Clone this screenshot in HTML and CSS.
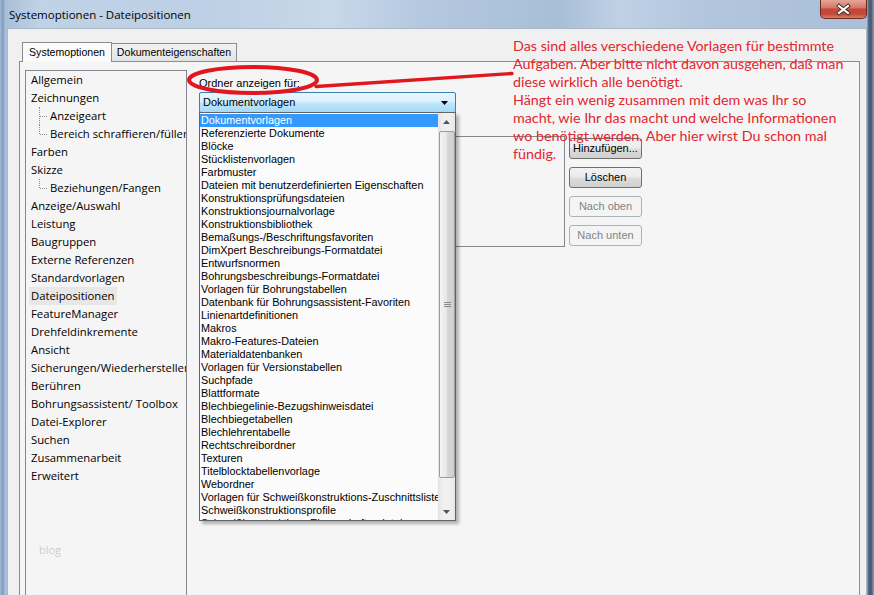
FILE: index.html
```html
<!DOCTYPE html>
<html lang="de">
<head>
<meta charset="utf-8">
<title>Systemoptionen - Dateipositionen</title>
<link rel="stylesheet" href="styles.css">
</head>
<body>
<div class="window">
  <div class="titlebar">
    <span class="title">Systemoptionen - Dateipositionen</span>
    <div class="close">
      <svg width="45" height="18" viewBox="0 0 45 18">
        <path d="M18 6 L27 13 M27 6 L18 13" stroke="#3a2a2a" stroke-width="4" stroke-linecap="square" fill="none"/>
        <path d="M18 6 L27 13 M27 6 L18 13" stroke="#ffffff" stroke-width="2.2" stroke-linecap="square" fill="none"/>
      </svg>
    </div>
  </div>
  <div class="client">
    <div class="tabs">
      <div class="tab active">Systemoptionen</div>
      <div class="tab">Dokumenteigenschaften</div>
    </div>
    <div class="panel">
      <ul class="tree">
        <li>Allgemein</li>
        <li>Zeichnungen</li>
        <li class="child">Anzeigeart</li>
        <li class="child last">Bereich schraffieren/füllen</li>
        <li>Farben</li>
        <li>Skizze</li>
        <li class="child last">Beziehungen/Fangen</li>
        <li>Anzeige/Auswahl</li>
        <li>Leistung</li>
        <li>Baugruppen</li>
        <li>Externe Referenzen</li>
        <li>Standardvorlagen</li>
        <li class="sel"><span>Dateipositionen</span></li>
        <li>FeatureManager</li>
        <li>Drehfeldinkremente</li>
        <li>Ansicht</li>
        <li>Sicherungen/Wiederherstellen</li>
        <li>Berühren</li>
        <li>Bohrungsassistent/ Toolbox</li>
        <li>Datei-Explorer</li>
        <li>Suchen</li>
        <li>Zusammenarbeit</li>
        <li>Erweitert</li>
      </ul>
      <div class="content">
        <div class="label">Ordner anzeigen für:</div>
        <div class="combo">
          <span>Dokumentvorlagen</span>
          <svg class="arrow" width="7" height="4" viewBox="0 0 7 4"><path d="M0 0 H7 L3.5 4 Z" fill="#000"/></svg>
        </div>
        <div class="folders">
          <div class="folderlist"></div>
          <div class="buttons">
            <div class="btn">Hinzufügen...</div>
            <div class="btn">Löschen</div>
            <div class="btn disabled">Nach oben</div>
            <div class="btn disabled">Nach unten</div>
          </div>
        </div>
      </div>
    </div>
  </div>

  <div class="droplist">
    <ul class="items">
      <li class="hl">Dokumentvorlagen</li>
      <li>Referenzierte Dokumente</li>
      <li>Blöcke</li>
      <li>Stücklistenvorlagen</li>
      <li>Farbmuster</li>
      <li>Dateien mit benutzerdefinierten Eigenschaften</li>
      <li>Konstruktionsprüfungsdateien</li>
      <li>Konstruktionsjournalvorlage</li>
      <li>Konstruktionsbibliothek</li>
      <li>Bemaßungs-/Beschriftungsfavoriten</li>
      <li>DimXpert Beschreibungs-Formatdatei</li>
      <li>Entwurfsnormen</li>
      <li>Bohrungsbeschreibungs-Formatdatei</li>
      <li>Vorlagen für Bohrungstabellen</li>
      <li>Datenbank für Bohrungsassistent-Favoriten</li>
      <li>Linienartdefinitionen</li>
      <li>Makros</li>
      <li>Makro-Features-Dateien</li>
      <li>Materialdatenbanken</li>
      <li>Vorlagen für Versionstabellen</li>
      <li>Suchpfade</li>
      <li>Blattformate</li>
      <li>Blechbiegelinie-Bezugshinweisdatei</li>
      <li>Blechbiegetabellen</li>
      <li>Blechlehrentabelle</li>
      <li>Rechtschreibordner</li>
      <li>Texturen</li>
      <li>Titelblocktabellenvorlage</li>
      <li>Webordner</li>
      <li>Vorlagen für Schweißkonstruktions-Zuschnittsliste</li>
      <li>Schweißkonstruktionsprofile</li>
      <li>Schweißkonstruktions-Eigenschaftendateien</li>
    </ul>
    <div class="scrollbar">
      <div class="sb-btn"><svg width="7" height="4" viewBox="0 0 7 4"><path d="M0 4 H7 L3.5 0 Z" fill="#555"/></svg></div>
      <div class="track">
        <div class="thumb"><span class="grip"></span></div>
      </div>
      <div class="sb-btn"><svg width="7" height="4" viewBox="0 0 7 4"><path d="M0 0 H7 L3.5 4 Z" fill="#555"/></svg></div>
    </div>
  </div>

  <svg class="markup" width="874" height="595" viewBox="0 0 874 595">
    <ellipse cx="253" cy="80" rx="64" ry="13" fill="none" stroke="#e2161f" stroke-width="4"/>
    <path d="M316 86.5 L512 73.5" stroke="#e2161f" stroke-width="3.4" stroke-linecap="round" fill="none"/>
  </svg>

  <div class="note">Das sind alles verschiedene Vorlagen für bestimmte<br>Aufgaben. Aber bitte nicht davon ausgehen, daß man<br>diese wirklich alle benötigt.<br>Hängt ein wenig zusammen mit dem was Ihr so<br>macht, wie Ihr das macht und welche Informationen<br>wo benötigt werden. Aber hier wirst Du schon mal<br>fündig.</div>

  <div class="watermark">blog</div>
</div>
</body>
</html>
```

FILE: styles.css
```css
* { box-sizing: border-box; margin: 0; padding: 0; }
html, body { width: 874px; height: 595px; overflow: hidden; }
body {
  background: #b7cbe1;
  font-family: "Liberation Sans", Arial, sans-serif;
  font-size: 11px;
  color: #000;
}

.window {
  position: relative;
  width: 874px;
  height: 595px;
  overflow: hidden;
  display: flex;
  flex-direction: column;
  background:
    linear-gradient(90deg, rgba(0,0,0,0) 867px, #5d7089 868px, #44556a 871px, #8aa3bf 874px),
    linear-gradient(90deg, #a2bad4 0, #7f9bbd 3px, #a9bfd8 5px, #c0d2e6 40px, #bccfe4 200px, #c9d8ea 330px, #b4c8df 420px, #a8bed8 560px, #c0d1e5 620px, #b2c6dd 700px, #a9bfd8 874px);
}

/* Title bar */
.titlebar {
  height: 28px;
  flex: none;
  display: flex;
  justify-content: space-between;
  align-items: flex-start;
}
.title {
  margin: 8px 0 0 9px;
  font-family: "Open Sans", "Noto Sans", sans-serif;
  font-size: 11.5px;
  line-height: 14px;
  color: #000;
}
.close {
  width: 47px;
  height: 19px;
  margin-right: 7px;
  border: 1px solid #6b2b25;
  border-top: none;
  border-radius: 0 0 5px 5px;
  background: linear-gradient(#e5a597 0%, #d67c6c 40%, #c5463a 52%, #c24a38 78%, #dc7d62 100%);
  display: flex;
  align-items: center;
  justify-content: center;
}

/* Client area */
.client {
  flex: 1;
  margin: 0 7px;
  border: 1px solid #a9b6c4;
  border-bottom: none;
  background: #f0f0f0;
  padding: 13px 6px 0 11px;
  display: flex;
  flex-direction: column;
  min-height: 0;
}

.tabs {
  height: 20px;
  margin-bottom: -1px;
  padding-left: 3px;
  display: flex;
  align-items: flex-end;
  flex: none;
}
.tab {
  position: relative;
  height: 18px;
  margin-bottom: 1px;
  width: 126px;
  margin-left: -1px;
  border: 1px solid #898c95;
  border-bottom: none;
  background: linear-gradient(#f2f2f2, #e3e3e3);
  font-size: 10.6px;
  line-height: 16px;
  text-align: center;
}
.tab.active {
  z-index: 1;
  height: 20px;
  margin-bottom: 0;
  margin-left: 0;
  width: 90px;
  background: #fbfbfb;
  line-height: 19px;
}

.panel {
  flex: 1;
  margin-bottom: -40px;
  border: 1px solid #898c95;
  background: #f5f5f5;
  display: flex;
  align-items: stretch;
  padding: 8px 0 0 5px;
}

/* Tree */
.tree {
  list-style: none;
  width: 162px;
  flex: none;
  border: 1px solid #828790;
  background: #f5f5f5;
  overflow: hidden;
  font-family: "Open Sans", "Noto Sans", sans-serif;
  font-size: 11.3px;
  line-height: 18px;
  white-space: nowrap;
}
.tree li {
  position: relative;
  padding-left: 5px;
  height: 18px;
}
.tree li.child { padding-left: 24px; }
.tree li.child::before {
  content: "";
  position: absolute;
  left: 13px;
  top: 0;
  bottom: 0;
  border-left: 1px dotted #8c8c8c;
}
.tree li.child.last::before { bottom: auto; height: 9px; }
.tree li.child::after {
  content: "";
  position: absolute;
  left: 14px;
  top: 9px;
  width: 7px;
  border-top: 1px dotted #8c8c8c;
}
.tree li.sel { padding-left: 3px; }
.tree li.sel span {
  display: inline-block;
  padding: 0 2px;
  background: #e7e7e7;
}

/* Content */
.content {
  margin-left: 12px;
  display: flex;
  flex-direction: column;
}
.label {
  margin-top: 7px;
  line-height: 13px;
}
.combo {
  margin-top: 2px;
  width: 257px;
  height: 21px;
  border: 1px solid #3c7fb1;
  border-radius: 2px;
  background: linear-gradient(#eaf6fd 0%, #d9f0fc 48%, #bee6fd 52%, #a7d9f5 100%);
  display: flex;
  align-items: center;
  justify-content: space-between;
  padding: 0 7px 0 3px;
  line-height: 19px;
}
.folders {
  margin-top: 23px;
  display: flex;
  align-items: flex-start;
}
.folderlist {
  width: 366px;
  height: 111px;
  border: 1px solid #828790;
  background: #f5f5f5;
}
.buttons {
  margin-left: 4px;
  padding-top: 2px;
  display: flex;
  flex-direction: column;
  gap: 8px;
}
.btn {
  width: 73px;
  height: 21px;
  border: 1px solid #707070;
  border-radius: 3px;
  background: linear-gradient(#f2f2f2 0%, #ebebeb 48%, #dddddd 52%, #cfcfcf 100%);
  text-align: center;
  line-height: 19px;
  white-space: nowrap;
}
.btn.disabled {
  border-color: #adb2b5;
  background: #f4f4f4;
  color: #838383;
}

/* Drop-down list (open popup over the dialog) */
.droplist {
  position: absolute;
  left: 199px;
  top: 112px;
  width: 257px;
  height: 409px;
  border: 1px solid #646464;
  background: #fbfbfb;
  box-shadow: 3px 3px 3px rgba(0,0,0,0.28);
  display: flex;
  overflow: hidden;
}
.items {
  list-style: none;
  flex: 1;
  overflow: hidden;
  padding-top: 1px;
  font-size: 10.85px;
  line-height: 13px;
  white-space: nowrap;
}
.items li {
  height: 13px;
  padding-left: 1px;
}
.items li.hl {
  background: #3399ff;
  color: #fff;
}
.scrollbar {
  width: 17px;
  flex: none;
  display: flex;
  flex-direction: column;
  background: linear-gradient(90deg, #e3e3e3, #f0f0f0 30%, #f0f0f0 70%, #e6e6e6);
}
.sb-btn {
  height: 17px;
  flex: none;
  display: flex;
  align-items: center;
  justify-content: center;
}
.track {
  flex: 1;
  padding: 1px 0 0 0;
}
.thumb {
  height: 347px;
  margin: 0 0 0 1px;
  width: 16px;
  border: 1px solid #9d9d9d;
  border-radius: 2px;
  background: linear-gradient(90deg, #f4f4f4 0%, #e8e8e8 45%, #d6d6d6 55%, #cfcfcf 100%);
  display: flex;
  align-items: center;
  justify-content: center;
}
.grip {
  width: 7px;
  height: 5px;
  border-top: 1px solid #8a8a8a;
  border-bottom: 1px solid #8a8a8a;
  background: linear-gradient(#8a8a8a, #8a8a8a) center / 100% 1px no-repeat;
}

/* Red markup */
.markup {
  position: absolute;
  left: 0;
  top: 0;
  pointer-events: none;
}
.note {
  position: absolute;
  left: 513px;
  top: 37px;
  font-family: Lato, "Open Sans", sans-serif;
  font-size: 14.3px;
  line-height: 18px;
  color: #e2262e;
  white-space: nowrap;
}
.watermark {
  position: absolute;
  left: 39px;
  top: 542px;
  font-family: "Open Sans", sans-serif;
  font-size: 11px;
  color: #cdcdcd;
}
```
